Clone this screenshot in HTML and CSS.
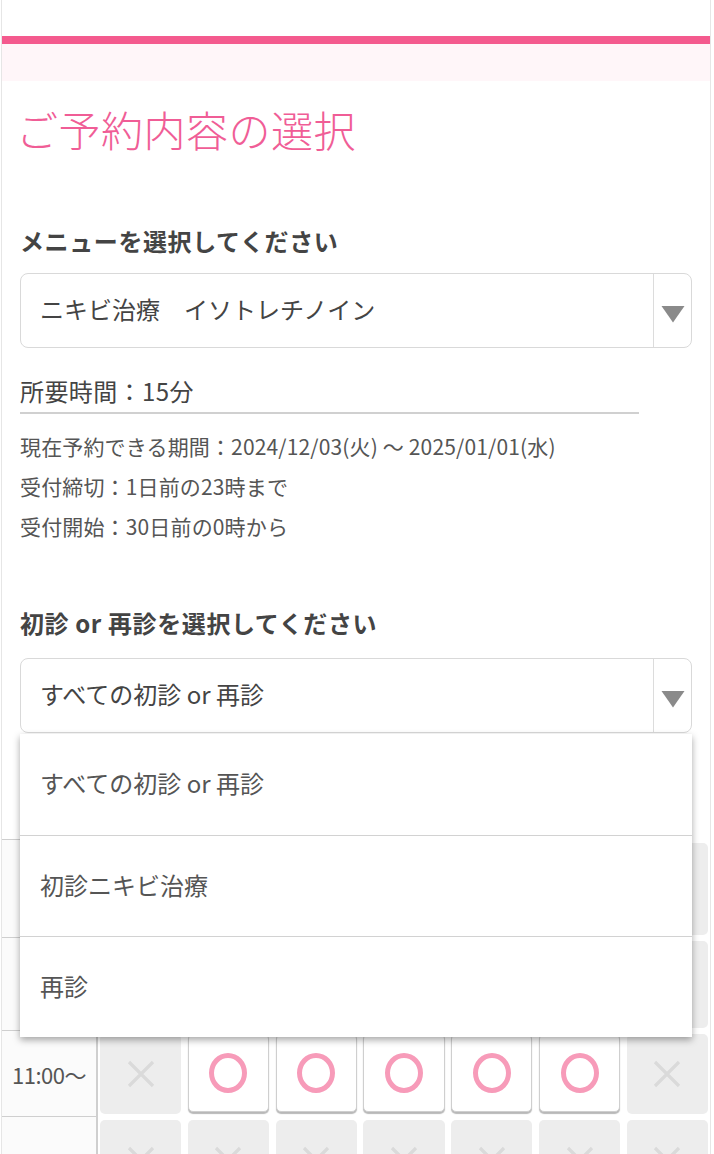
FILE: index.html
```html
<!DOCTYPE html>
<html lang="ja">
<head>
<meta charset="utf-8">
<title>ご予約内容の選択</title>
<link rel="stylesheet" href="styles.css">
</head>
<body>
<div class="page">
  <header class="top"></header>
  <div class="bar"></div>
  <div class="band"></div>
  <main class="content">
    <h1 class="title">ご予約内容の選択</h1>
    <h2 class="label label-menu">メニューを選択してください</h2>
    <div class="select">
      <span class="select-text">ニキビ治療　イソトレチノイン</span>
      <span class="select-arrow"><svg width="24" height="18" viewBox="0 0 24 18"><path d="M0.5 1 H23.5 L12 17.5 Z" fill="#8a8a8a"/></svg></span>
    </div>
    <p class="duration">所要時間：15分</p>
    <ul class="info">
      <li>現在予約できる期間：2024/12/03(火) ～ 2025/01/01(水)</li>
      <li>受付締切：1日前の23時まで</li>
      <li>受付開始：30日前の0時から</li>
    </ul>
    <h2 class="label label-visit">初診 or 再診を選択してください</h2>
    <div class="select select-open">
      <span class="select-text">すべての初診 or 再診</span>
      <span class="select-arrow"><svg width="24" height="18" viewBox="0 0 24 18"><path d="M0.5 1 H23.5 L12 17.5 Z" fill="#8a8a8a"/></svg></span>
      <ul class="dropdown">
        <li class="option">すべての初診 or 再診</li>
        <li class="option">初診ニキビ治療</li>
        <li class="option">再診</li>
      </ul>
    </div>
  </main>

  <section class="calendar">
    <div class="row row-head">
      <div class="time"></div>
      <div class="slots">
        <div class="day"></div><div class="day"></div><div class="day"></div><div class="day"></div><div class="day"></div><div class="day"></div><div class="day"></div>
      </div>
    </div>
    <div class="row row-a">
      <div class="time"></div>
      <div class="slots">
        <div class="cell off"></div><div class="cell off"></div><div class="cell off"></div><div class="cell off"></div><div class="cell off"></div><div class="cell off"></div><div class="cell off"></div>
      </div>
    </div>
    <div class="row row-b">
      <div class="time"></div>
      <div class="slots">
        <div class="cell off"></div><div class="cell off"></div><div class="cell off"></div><div class="cell off"></div><div class="cell off"></div><div class="cell off"></div><div class="cell off"></div>
      </div>
    </div>
    <div class="row">
      <div class="time">11:00～</div>
      <div class="slots">
        <div class="cell off"><svg class="x" width="30" height="30" viewBox="0 0 30 30"><path d="M3 3 L27 27 M27 3 L3 27" stroke="#dadada" stroke-width="3.2" fill="none"/></svg></div>
        <div class="cell on"><span class="ring"></span></div>
        <div class="cell on"><span class="ring"></span></div>
        <div class="cell on"><span class="ring"></span></div>
        <div class="cell on"><span class="ring"></span></div>
        <div class="cell on"><span class="ring"></span></div>
        <div class="cell off"><svg class="x" width="30" height="30" viewBox="0 0 30 30"><path d="M3 3 L27 27 M27 3 L3 27" stroke="#dadada" stroke-width="3.2" fill="none"/></svg></div>
      </div>
    </div>
    <div class="row">
      <div class="time time-next">12:00～</div>
      <div class="slots">
        <div class="cell off"><svg class="x" width="30" height="30" viewBox="0 0 30 30"><path d="M3 3 L27 27 M27 3 L3 27" stroke="#dadada" stroke-width="3.2" fill="none"/></svg></div>
        <div class="cell off"><svg class="x" width="30" height="30" viewBox="0 0 30 30"><path d="M3 3 L27 27 M27 3 L3 27" stroke="#dadada" stroke-width="3.2" fill="none"/></svg></div>
        <div class="cell off"><svg class="x" width="30" height="30" viewBox="0 0 30 30"><path d="M3 3 L27 27 M27 3 L3 27" stroke="#dadada" stroke-width="3.2" fill="none"/></svg></div>
        <div class="cell off"><svg class="x" width="30" height="30" viewBox="0 0 30 30"><path d="M3 3 L27 27 M27 3 L3 27" stroke="#dadada" stroke-width="3.2" fill="none"/></svg></div>
        <div class="cell off"><svg class="x" width="30" height="30" viewBox="0 0 30 30"><path d="M3 3 L27 27 M27 3 L3 27" stroke="#dadada" stroke-width="3.2" fill="none"/></svg></div>
        <div class="cell off"><svg class="x" width="30" height="30" viewBox="0 0 30 30"><path d="M3 3 L27 27 M27 3 L3 27" stroke="#dadada" stroke-width="3.2" fill="none"/></svg></div>
        <div class="cell off"><svg class="x" width="30" height="30" viewBox="0 0 30 30"><path d="M3 3 L27 27 M27 3 L3 27" stroke="#dadada" stroke-width="3.2" fill="none"/></svg></div>
      </div>
    </div>
  </section>
</div>
</body>
</html>
```

FILE: styles.css
```css
* { box-sizing: border-box; }
html, body { margin: 0; padding: 0; background: #fff; }
body {
  font-family: "Noto Sans CJK JP", "Noto Sans", sans-serif;
  color: #444;
  overflow: hidden;
}
.page {
  margin: 0 3px 0 1px;
  border-left: 1px solid #e6e6e6;
  border-right: 1px solid #e6e6e6;
  min-height: 1154px;
}
.top { height: 36px; }
.bar { height: 8px; background: #f45a8e; }
.band { height: 37px; background: #fff6f9; }

.content { padding: 0 18px; }
.title {
  margin: 23px 0 0 -4px;
  font-size: 42px;
  line-height: 50px;
  font-weight: 300;
  color: #f05d96;
  letter-spacing: 0.5px;
}
.label {
  margin: 0;
  font-size: 24px;
  line-height: 32px;
  font-weight: 700;
  color: #444;
  letter-spacing: 0.6px;
}
.label-menu { margin-top: 71px; }
.label-visit { margin-top: 61px; }

.select {
  position: relative;
  display: flex;
  align-items: stretch;
  height: 75px;
  border: 1px solid #d9d9d9;
  border-radius: 8px;
  background: #fff;
  margin-top: 16px;
}
.select-open { margin-top: 19px; }
.select-text {
  flex: 1;
  display: flex;
  align-items: center;
  padding-left: 19px;
  padding-bottom: 4px;
  font-size: 24px;
  color: #444;
}
.select-arrow {
  width: 38px;
  border-left: 1px solid #dcdcdc;
  display: flex;
  align-items: center;
  justify-content: center;
  padding-top: 6px;
}
.select-arrow svg { display: block; }

.dropdown {
  position: absolute;
  top: calc(100% + 2px);
  left: -1px;
  right: -1px;
  margin: 0;
  padding: 0;
  list-style: none;
  background: #fff;
  box-shadow: 0 3px 7px rgba(0, 0, 0, 0.35);
  z-index: 10;
}
.option {
  height: 101px;
  display: flex;
  align-items: center;
  padding-left: 20px;
  padding-bottom: 4px;
  font-size: 24px;
  color: #555;
}
.option + .option { border-top: 1px solid #d2d2d2; }

.duration {
  width: 619px;
  margin: 27px 0 0;
  padding-bottom: 5px;
  font-size: 24px;
  line-height: 32px;
  letter-spacing: 0.4px;
  border-bottom: 2px solid #d0d0d0;
  color: #444;
}
.info {
  list-style: none;
  margin: 12px 0 0;
  padding: 0;
  font-size: 21px;
  line-height: 40px;
  color: #555;
  letter-spacing: 0.15px;
}

.calendar { margin-top: 12px; }
.row { display: flex; height: 86px; }
.row-head { height: 95px; }
.row-a { height: 98px; }
.row-b { height: 93px; }
.time {
  width: 96px;
  flex: none;
  border-right: 2px solid #cfcfcf;
  border-bottom: 1px solid #cfcfcf;
  background: #fbfbfb;
  display: flex;
  align-items: center;
  justify-content: center;
  font-size: 22px;
  color: #555;
  letter-spacing: -0.5px;
}
.time-next { align-items: flex-start; padding-top: 28px; }
.row-head .time { background: #fff; }
.slots {
  flex: 1;
  display: grid;
  grid-template-columns: repeat(7, 1fr);
  column-gap: 6.5px;
  padding: 3px 2px 3px 2px;
}
.cell {
  border-radius: 5px;
  display: flex;
  align-items: center;
  justify-content: center;
}
.off { background: #ededed; }
.on {
  background: #fff;
  border: 1px solid #cfcfcf;
  box-shadow: 0 2px 1px rgba(0, 0, 0, 0.28);
  margin-bottom: 2px;
}
.ring {
  display: block;
  width: 38px;
  height: 40px;
  border: 5px solid #f79bb9;
  border-radius: 50%;
}
.x { display: block; }
```
